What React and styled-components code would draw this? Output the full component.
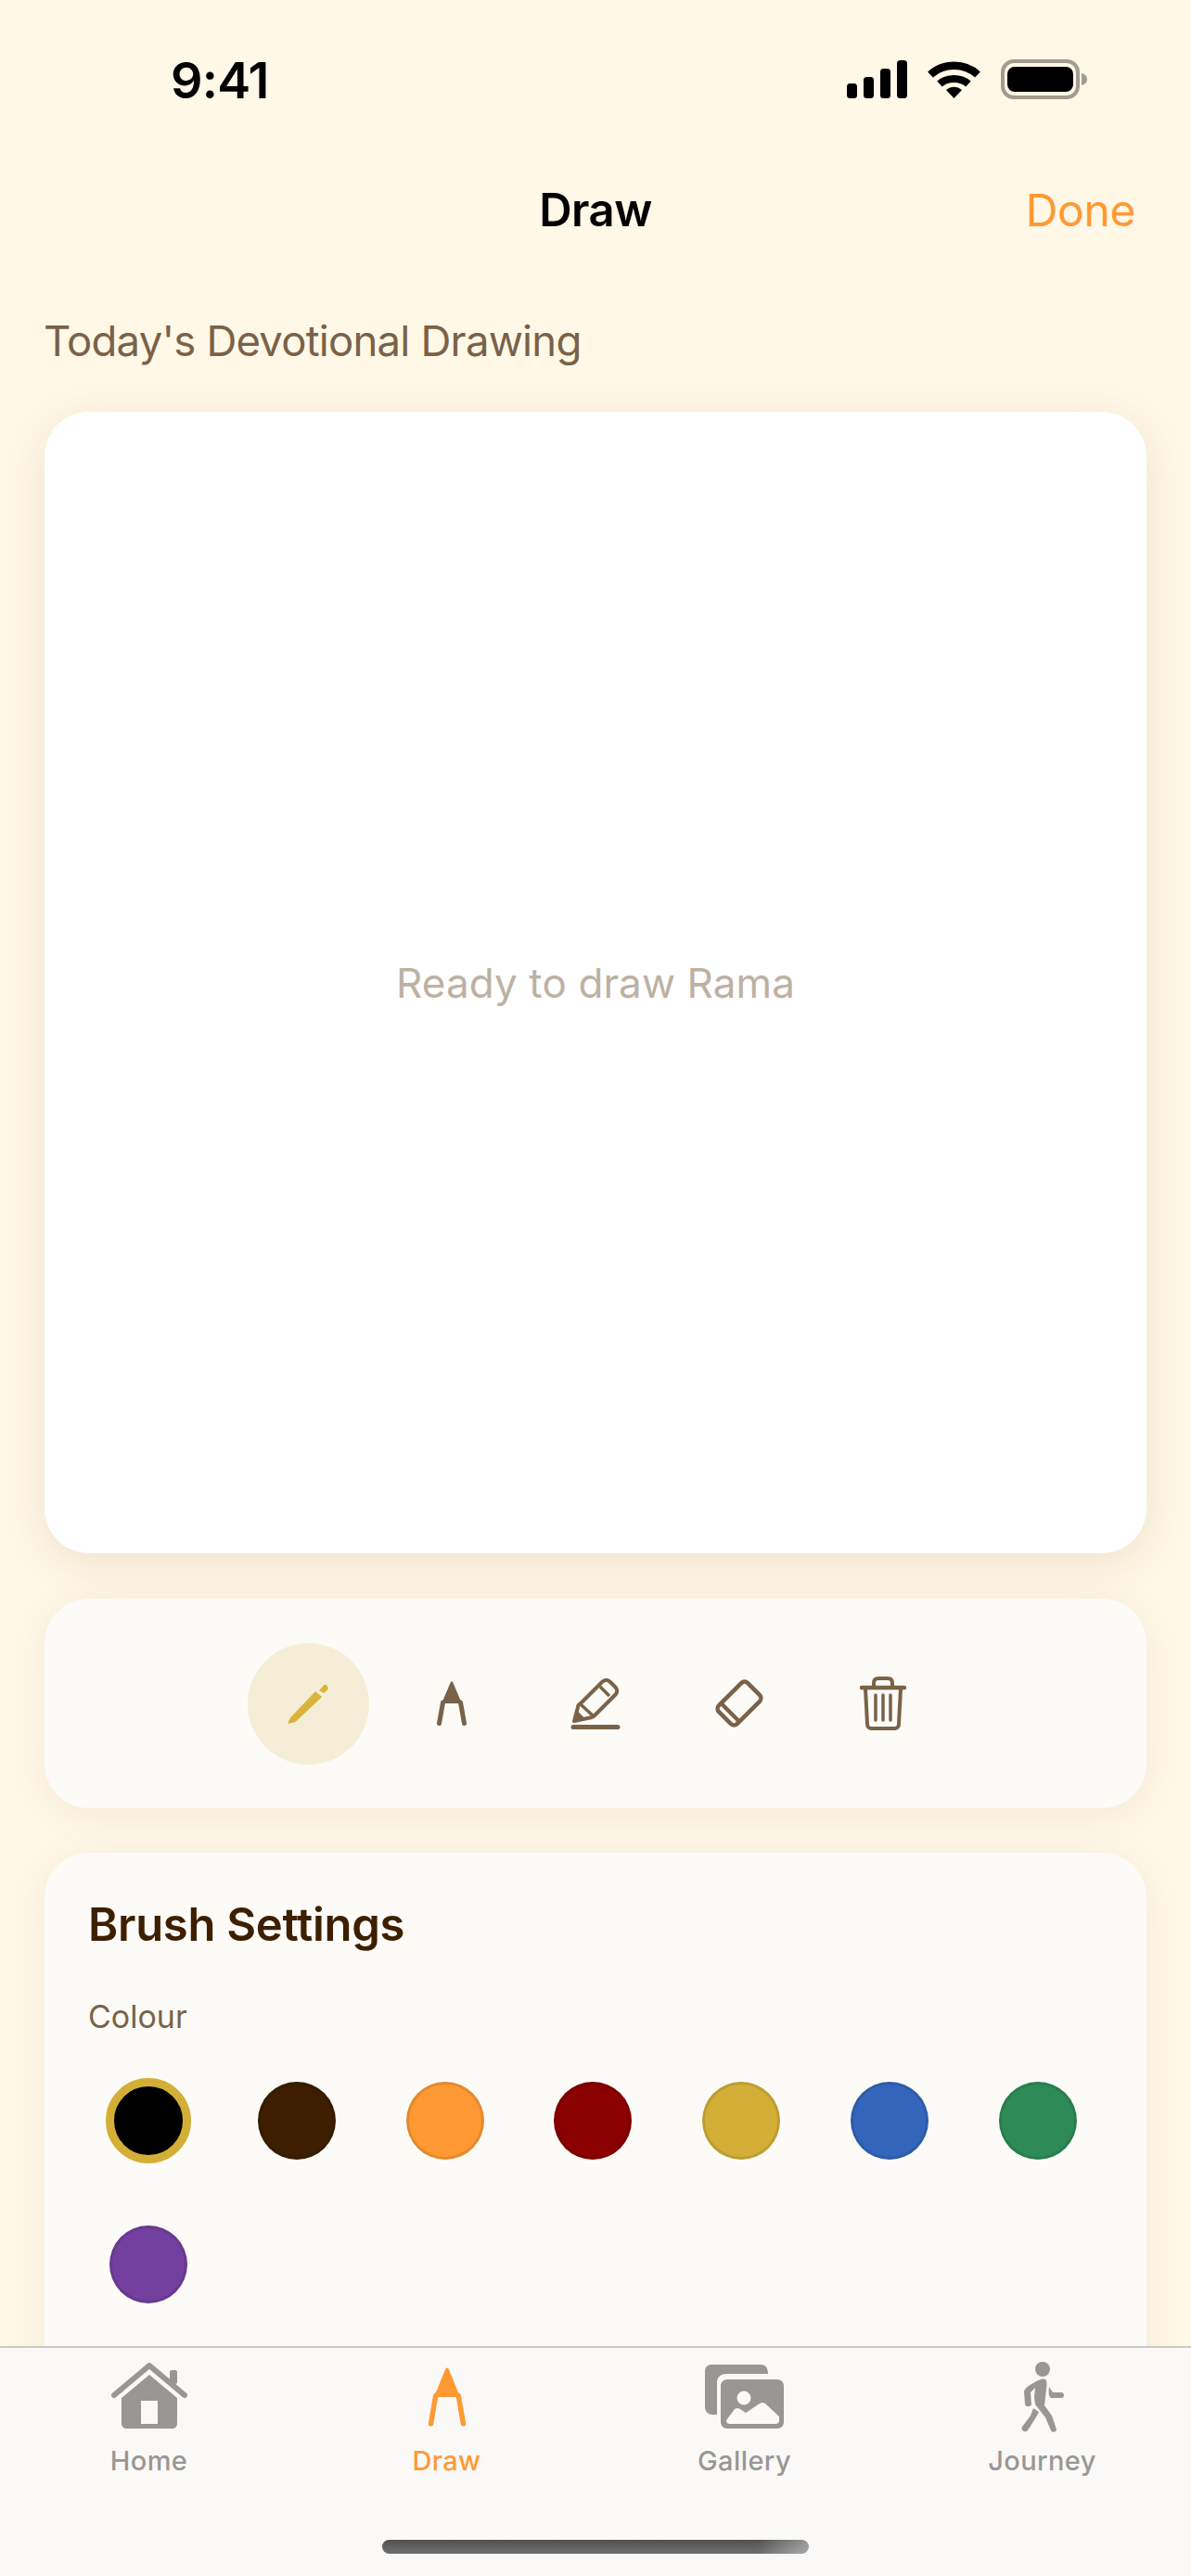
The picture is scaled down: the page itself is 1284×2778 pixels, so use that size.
import React from 'react';
import styled, { createGlobalStyle } from 'styled-components';

const Global = createGlobalStyle`
  html, body { margin: 0; padding: 0; background: #FFF8E7; }
  #root { height: 2778px; overflow: hidden; }
`;
const Font = `"Inter", "Liberation Sans", sans-serif`;

const Screen = styled.div`
  position: relative; width: 1284px; height: 2778px; overflow: hidden;
  background: #FFF8E7; font-family: ${Font}; display: flex; flex-direction: column;
`;
const StatusBar = styled.div`
  height: 174px; flex: none; padding: 60px 112px 0 184px; box-sizing: border-box;
  display: flex; justify-content: space-between; align-items: flex-start;
`;
const Time = styled.div`
  font-size: 54px; line-height: 54px; font-weight: 600; color: #000; letter-spacing: -.8px;
`;
const StatusIcons = styled.div`
  display: flex; align-items: center; gap: 22px; margin-top: 4px;
`;
const NavBar = styled.div`
  height: 104px; flex: none; position: relative; display: flex; align-items: center; justify-content: center;
`;
const NavTitle = styled.div`
  font-size: 49px; font-weight: 600; color: #000; letter-spacing: -.5px;
`;
const DoneButton = styled.div`
  position: absolute; right: 60px; top: 0; bottom: 0; display: flex; align-items: center;
  font-size: 48px; color: #FF9933; letter-spacing: -.4px;
`;
const Content = styled.div`
  padding: 63px 48px 0; display: flex; flex-direction: column;
`;
const Subtitle = styled.div`
  font-size: 45.5px; line-height: 54px; color: #7A6248; letter-spacing: -.8px; margin: 0 0 49px -1px;
`;
const CanvasCard = styled.div`
  height: 1231px; background: #fff; border-radius: 48px;
  box-shadow: 0 10px 48px rgba(139, 109, 50, .15);
  display: flex; align-items: center; justify-content: center;
  font-size: 44px; letter-spacing: .1px; color: #BDB1A3; margin-bottom: 49px;
`;
const ToolCard = styled.div`
  height: 226px; background: #FCFBF7; border-radius: 48px; box-sizing: border-box;
  box-shadow: 0 6px 40px rgba(139, 109, 50, .1);
  display: flex; align-items: center; justify-content: center; gap: 24px; margin-bottom: 48px;
`;
const ToolButton = styled.div`
  width: 131px; height: 131px; border-radius: 50%;
  display: flex; align-items: center; justify-content: center;
  background: ${p => (p.$active ? '#F5EDD5' : 'transparent')};
`;
const BrushCard = styled.div`
  background: #FCFBF7; border-radius: 48px; padding: 48px 48px 48px 47px; height: 900px; box-sizing: border-box;
  box-shadow: 0 6px 40px rgba(139, 109, 50, .1);
`;
const CardTitle = styled.div`
  font-size: 49px; line-height: 60px; font-weight: 600; color: #3D1F00; letter-spacing: -.3px;
`;
const FieldLabel = styled.div`
  font-size: 34px; line-height: 40px; color: #7A6248; margin-top: 49px;
`;
const Swatches = styled.div`
  display: grid; grid-template-columns: repeat(7, 84px); justify-content: space-between;
  row-gap: 71px; padding: 0 27px 0 23px; margin-top: 50px;
`;
const Swatch = styled.div`
  width: 84px; height: 84px; border-radius: 50%; box-sizing: border-box;
  background: ${p => p.$color};
  border: 3px solid rgba(0, 0, 0, .1);
  ${p => p.$selected && `
    border: 9px solid #D4AF37; width: 92px; height: 92px; margin: -4px;
  `}
`;
const TabBar = styled.div`
  position: absolute; left: 0; right: 0; bottom: 0; height: 248px; box-sizing: border-box;
  background: #FAF9F7; border-top: 2px solid #CBC9C3;
  display: grid; grid-template-columns: repeat(4, 321px); align-items: start;
`;
const TabItem = styled.div`
  display: flex; flex-direction: column; align-items: center;
  color: ${p => (p.$active ? '#FF9933' : '#999794')};
`;
const TabIcon = styled.div`
  height: 96px; width: 100%; display: flex; align-items: center; justify-content: center; margin-top: 5px;
`;
const TabLabel = styled.div`
  font-size: 29px; line-height: 34px; font-weight: 500; margin-top: 4px; letter-spacing: .4px;
`;
const HomeIndicator = styled.div`
  position: absolute; left: 412px; bottom: 24px; width: 460px; height: 15px; border-radius: 8px;
  background:
    linear-gradient(90deg, rgba(255, 255, 255, 0) 88%, rgba(255, 255, 255, .4) 100%),
    linear-gradient(180deg, #505050, #707070);
`;

const Signal = () => (
  <svg width="65" height="41" viewBox="0 0 65 41" fill="#000">
    <rect x="0" y="25" width="11" height="16" rx="3.5" />
    <rect x="18" y="18" width="11" height="23" rx="3.5" />
    <rect x="36" y="9" width="11" height="32" rx="3.5" />
    <rect x="54" y="0" width="11" height="41" rx="3.5" />
  </svg>
);
const Wifi = () => (
  <svg width="57" height="41" viewBox="0 0 57 41" fill="none" stroke="#000">
    <path d="M3 15.5 C17 2.5 40 2.5 54 15.5" strokeWidth="8.5" />
    <path d="M13 25.5 C21 18 36 18 44 25.5" strokeWidth="8" />
    <path d="M20 32 C25 27.5 32 27.5 37 32 L28.5 41 Z" fill="#000" stroke="none" />
  </svg>
);
const Battery = () => (
  <svg width="93" height="43" viewBox="0 0 93 43">
    <rect x="2" y="2" width="81" height="39" rx="12" fill="none" stroke="#A29C8E" strokeWidth="4" />
    <rect x="7" y="8" width="71" height="27" rx="8" fill="#000" />
    <path d="M87 15 C91 16 93 18 93 21.5 C93 25 91 27 87 28 Z" fill="#A29C8E" />
  </svg>
);
const Pencil = () => (
  <svg width="44" height="43" viewBox="0 0 44 43" fill="#D9B43A">
    <path d="M30 8 L37 14 L8.5 41 L0 43 L3 36.5 Z" />
    <path d="M34 7 L39 1.5 C40 .5 41 .5 42 1.5 C43.5 3 44 4 43.5 6 L39 10 Z" />
  </svg>
);
const CompassIcon = ({ color = '#7A6248', w = 34, h = 48, leg = 5 }) => (
  <svg width={w} height={h} viewBox="0 0 34 48" fill="none" preserveAspectRatio="none">
    <path d="M17 2 L25 21 L9 21 Z" fill={color} stroke={color} strokeWidth="3" strokeLinejoin="round" />
    <path d="M7.5 23 L3.5 45.5 M26.5 23 L30.5 45.5" stroke={color} strokeWidth={leg} strokeLinecap="round" />
    <path d="M7.5 22 H26.5" stroke={color} strokeWidth="4" />
  </svg>
);
const Highlighter = () => (
  <svg width="56" height="56" viewBox="0 0 56 56" fill="none" stroke="#7A6248" strokeWidth="4" strokeLinejoin="round">
    <path d="M14 26 L35 5 C38 2 41 2 44 5 L49 10 C52 13 52 16 49 19 L27 41 C26 42 25 42.5 24 43 L5 47 L9.5 30 C10 29 12 28 14 26 Z" />
    <path d="M5 47 L8 37 L15 44 Z" fill="#7A6248" strokeWidth="2" />
    <path d="M12 29 L26 42 M33 10 L43 20" strokeWidth="3.5" />
    <path d="M4 53.5 H52" strokeWidth="5" strokeLinecap="round" />
  </svg>
);
const Eraser = () => (
  <svg width="56" height="56" viewBox="0 0 56 56" fill="none" stroke="#7A6248" strokeWidth="4.5" strokeLinejoin="round">
    <rect x="6" y="14" width="44" height="28" rx="5" transform="rotate(-45 28 28)" />
    <path d="M8.5 28 L28 47.5" />
  </svg>
);
const Trash = () => (
  <svg width="50" height="58" viewBox="0 0 50 58" fill="none" stroke="#7A6248" strokeLinecap="round" strokeLinejoin="round">
    <path d="M2 12 H48" strokeWidth="4.5" />
    <path d="M15 12 V7 C15 3 17 2 20 2 H30 C33 2 35 3 35 7 V12" strokeWidth="4" />
    <path d="M6 13 L8 51 C8 54 9.5 56 12 56 H38 C40.5 56 42 54 42 51 L44 13" strokeWidth="4" />
    <path d="M17 20 V47 M25 20 V47 M33 20 V47" strokeWidth="3.5" />
  </svg>
);
const HomeIcon = () => (
  <svg width="82" height="77" viewBox="0 0 82 77" fill="currentColor">
    <path d="M3 36 L41 4 L79 36" fill="none" stroke="currentColor" strokeWidth="6" strokeLinecap="round" strokeLinejoin="round" />
    <rect x="63" y="9" width="8" height="15" rx="2" />
    <path fillRule="evenodd" d="M41 14 L71 39 V66 C71 70 69 72 65 72 H17 C13 72 11 70 11 66 V39 Z M32 42 V67 H50 V42 Z" />
  </svg>
);
const GalleryIcon = () => (
  <svg width="85" height="70" viewBox="0 0 85 70" fill="currentColor">
    <path d="M7 0 H60 C65 0 68 3 68 10 H24 C17 10 13 13 13 20 V54 H8 C3 54 0 50 0 46 V7 C0 3 3 0 7 0 Z" />
    <path fillRule="evenodd" d="M24 16 H78 C82 16 85 19 85 23 V62 C85 66 82 69 78 69 H24 C20 69 17 66 17 62 V23 C17 19 20 16 24 16 Z M42 28.5 A7.5 7.5 0 1 0 42 43.5 A7.5 7.5 0 1 0 42 28.5 Z M23 60 Q23 64 27 64 H76 Q80 64 80 60 V56 L65 42 Q62 40 59 42 L44 52 L38 48 Q35 46 32 48 Z" />
  </svg>
);
const WalkIcon = () => (
  <svg width="46" height="76" viewBox="0 0 46 76" fill="currentColor">
    <ellipse cx="23" cy="8" rx="8" ry="8" />
    <path d="M21 19 C28 17 28 22 27 30 L25 47 L33 58 L38 73 C38 76 33 77 32 74 L26 60 L15 46 L14 38 L15 28 L10 33 L11 46 C10 49 5 49 4 46 L3 32 C3 29 12 22 21 19 Z" />
    <path d="M30 27 L34 33 H43 C47 33 47 39 43 39 H33 C30 39 29 35 30 27 Z" />
    <path d="M13 50 L19 54 L17 58 L7 74 C4 77 -1 74 1 70 L10 58 Z" />
  </svg>
);

const colors = ['#000000', '#3D1F00', '#FF9933', '#8B0000', '#D4AF37', '#3366BB', '#2E8B57', '#7440A0'];
const tabs = [
  { label: 'Home', Icon: HomeIcon },
  { label: 'Draw', Icon: () => <CompassIcon color="#FF9933" w={44} h={64} leg={4.2} />, active: true },
  { label: 'Gallery', Icon: GalleryIcon },
  { label: 'Journey', Icon: WalkIcon },
];

export default function App() {
  return (
    <Screen>
      <Global />
      <StatusBar>
        <Time>9:41</Time>
        <StatusIcons><Signal /><Wifi /><Battery /></StatusIcons>
      </StatusBar>
      <NavBar>
        <NavTitle>Draw</NavTitle>
        <DoneButton>Done</DoneButton>
      </NavBar>
      <Content>
        <Subtitle>Today's Devotional Drawing</Subtitle>
        <CanvasCard>Ready to draw Rama</CanvasCard>
        <ToolCard>
          <ToolButton $active><Pencil /></ToolButton>
          <ToolButton><CompassIcon /></ToolButton>
          <ToolButton><Highlighter /></ToolButton>
          <ToolButton><Eraser /></ToolButton>
          <ToolButton><Trash /></ToolButton>
        </ToolCard>
        <BrushCard>
          <CardTitle>Brush Settings</CardTitle>
          <FieldLabel>Colour</FieldLabel>
          <Swatches>
            {colors.map((c, i) => <Swatch key={c} $color={c} $selected={i === 0} />)}
          </Swatches>
        </BrushCard>
      </Content>
      <TabBar>
        {tabs.map(({ label, Icon, active }) => (
          <TabItem key={label} $active={active}>
            <TabIcon><Icon /></TabIcon>
            <TabLabel>{label}</TabLabel>
          </TabItem>
        ))}
      </TabBar>
      <HomeIndicator />
    </Screen>
  );
}
